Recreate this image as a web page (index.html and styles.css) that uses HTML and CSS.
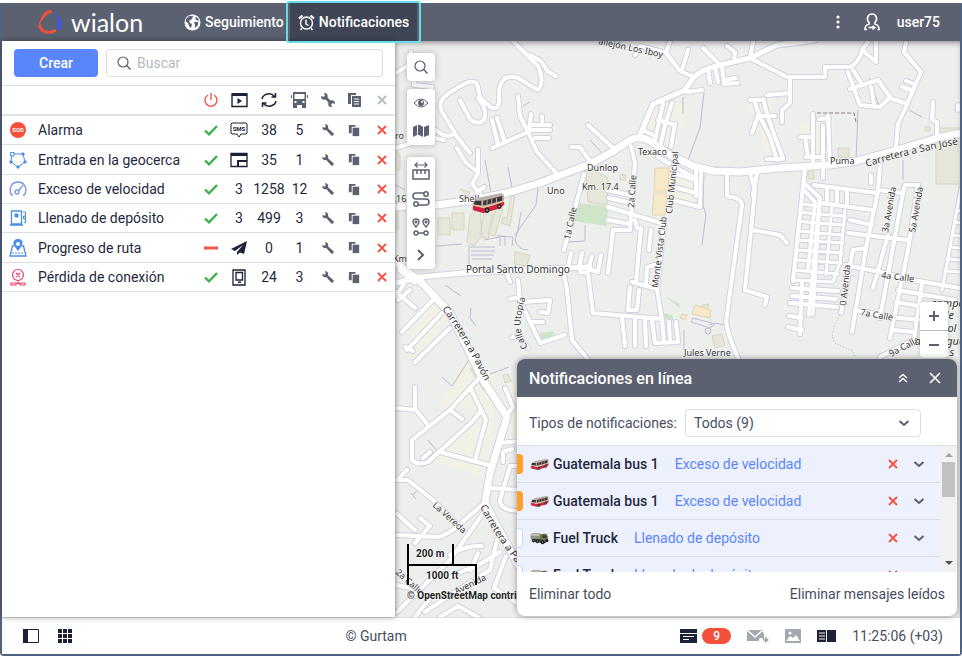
FILE: index.html
```html
<!DOCTYPE html>
<html lang="es">
<head>
    <meta charset="UTF-8">
    <meta name="viewport" content="width=device-width, initial-scale=1.0">
    <title>Wialon - Notificaciones</title>
    <link rel="stylesheet" href="styles.css">
</head>
<body>
    <!-- Shared icons -->
    <svg class="sprite" aria-hidden="true">
        <symbol id="i-search" viewBox="0 0 16 16"><circle cx="7" cy="7" r="5" fill="none" stroke="currentColor" stroke-width="1.2"/><path d="M10.6 10.6 14.5 14.5" stroke="currentColor" stroke-width="1.4"/></symbol>
        <symbol id="i-check" viewBox="0 0 16 16"><path d="M2 8.5 6 12.3 14 4" fill="none" stroke="#3fae4f" stroke-width="2.4"/></symbol>
        <symbol id="i-x" viewBox="0 0 16 16"><path d="M4 4 12 12M12 4 4 12" stroke="currentColor" stroke-width="1.9"/></symbol>
        <symbol id="i-wrench" viewBox="0 0 16 16"><path d="M1.5 4.5 4 5.5 5.5 4 4.5 1.5C7 1 9 3.5 8 6L14.5 12C15 13.5 13.5 15 12 14.500L6 8C3.5 9 1 7 1.5 4.500Z" fill="currentColor"/></symbol>
        <symbol id="i-wrenches" viewBox="0 0 16 16"><path d="M1 4 3.5 5 5 3.5 4 1C6.5 .5 8.5 3 7.5 5.5L10.5 8.5C13 7.5 15.5 9.5 15 12L12.5 11 11 12.5 12 15C9.5 15.5 7.5 13 8.5 10.5L5.5 7.5C3 8.5 .5 6.5 1 4Z" fill="currentColor"/></symbol>
        <symbol id="i-copy" viewBox="0 0 16 16"><path d="M2 2H9V4H5V11H2Z" fill="currentColor"/><path d="M6 5H13V14H6Z" fill="currentColor"/></symbol>
        <symbol id="i-down" viewBox="0 0 16 16"><path d="M3.5 6 8 10 12.5 6" fill="none" stroke="currentColor" stroke-width="2"/></symbol>
        <symbol id="i-bus" viewBox="0 0 36 24">
            <path d="M2 11 8 6 32 1 35 3V12L31 17 13 22 2 19Z" fill="#bdb0a8"/>
            <path d="M2 14 14 17 35 10V13L31 17 13 22 2 19Z" fill="#d5213f"/>
            <path d="M2 13.5 14 16 35 9.5" fill="none" stroke="#e6cf9a" stroke-width="1.3"/>
            <path d="M4 9 11 9V14L3 13Z" fill="#3d3236"/>
            <path d="M13 9 33 4V9L13 14Z" fill="#40363a"/>
            <path d="M17 8V13M22 7V12M27 6V11" stroke="#bdb0a8"/>
            <ellipse cx="17" cy="19" rx="2.6" ry="3" fill="#2b2527"/><ellipse cx="30" cy="15" rx="2.3" ry="2.8" fill="#2b2527"/>
            <circle cx="17" cy="19" r="1" fill="#aaa"/><circle cx="30" cy="15" r="1" fill="#aaa"/>
        </symbol>
        <symbol id="i-truck" viewBox="0 0 36 24">
            <path d="M1 5 5 2H18L22 5V12L18 14H3L1 11Z" fill="#8f957a"/>
            <path d="M3 4H18V7H3Z" fill="#c9cdb9"/>
            <path d="M19 5 24 3H31L34 8V17L24 20 18 16Z" fill="#6d7250"/>
            <path d="M23 6H30L32 10 24 11Z" fill="#343a37"/>
            <path d="M2 13H19L24 19 34 16V18L24 22Z" fill="#45453c"/>
            <circle cx="7" cy="16" r="3.6" fill="#292929"/><circle cx="14" cy="17" r="3.8" fill="#292929"/><circle cx="24" cy="19" r="4" fill="#222"/><circle cx="32" cy="16" r="3" fill="#222"/>
            <circle cx="7" cy="16" r="1" fill="#999"/><circle cx="14" cy="17" r="1" fill="#999"/><circle cx="24" cy="19" r="1.2" fill="#999"/>
        </symbol>
    </svg>

    <div class="app">
        <header class="topbar">
            <a href="#" class="logo">
                <svg width="24" height="26" viewBox="0 0 24 26">
                    <path d="M13 1C5 1 3 9 0 17 3 15 5 8 10 5 12 3 14 5 14 3Z" fill="#f4503c"/>
                    <path d="M0 17C2 24 10 27 18 23 19 21 17 20 15 21 10 23 4 22 3 15Z" fill="#f4503c"/>
                    <path d="M15 2C20 5 25 13 23 19 22 21 19 21 19 19 20 13 20 8 15 2Z" fill="#4355f5"/>
                </svg>
                <span>wialon</span>
            </a>
            <nav>
                <a href="#" class="tab">
                    <svg width="17" height="17" viewBox="0 0 17 17"><circle cx="8.5" cy="8.5" r="8" fill="#fff"/><path d="M2 5 5 2 9 2 8 5 5 7 6 9 8 10 7 14 5 12 4 9 2 8ZM11 3 14 4 15 7 12 6ZM10 8 14 8 14 11 11 14 11 11Z" fill="#5b6170"/></svg>
                    <span>Seguimiento</span>
                </a>
                <a href="#" class="tab active">
                    <svg width="17" height="17" viewBox="0 0 17 17" fill="none" stroke="#fff" stroke-width="1.4"><circle cx="8.5" cy="9" r="6"/><path d="M8 5.5V10L10.5 11.5M4 14 2.5 16M13 14 14.5 16"/><path d="M1 4.5 4.5 1.5M12.5 1.5 16 4.5" stroke-width="2.2"/></svg>
                    <span>Notificaciones</span>
                </a>
            </nav>
            <div class="account">
                <button class="plain" aria-label="Más"><svg width="4" height="14" viewBox="0 0 4 14" fill="#fff"><circle cx="2" cy="2" r="1.6"/><circle cx="2" cy="7" r="1.6"/><circle cx="2" cy="12" r="1.6"/></svg></button>
                <button class="plain user">
                    <svg width="16" height="18" viewBox="0 0 16 18" fill="none" stroke="#fff" stroke-width="1.7"><path d="M5 9.5C2 6 3.5 1 8 1S14 6 11 9.5M5 9V11C2 12 1 13 1 16.5H3M11 9V11C14 12 15 13 15 16.5H13.5"/><path d="M4.5 14.5H9"/><path d="M8.5 12 12 14.5 8.5 17.5Z" fill="#fff" stroke="none"/></svg>
                    <span>user75</span>
                </button>
            </div>
        </header>

        <main>
            <section class="sidebar">
                <div class="tools">
                    <button class="create">Crear</button>
                    <label class="search">
                        <svg width="16" height="16" class="grey"><use href="#i-search"/></svg>
                        <input type="text" placeholder="Buscar" aria-label="Buscar">
                    </label>
                </div>
                <table>
                    <colgroup><col class="c-icon"><col><col class="c-28"><col class="c-28"><col class="c-32"><col class="c-29"><col class="c-27"><col class="c-27"><col class="c-27"></colgroup>
                    <thead>
                        <tr>
                            <th></th>
                            <th></th>
                            <th><svg width="16" height="16" viewBox="0 0 16 16" fill="none" stroke="#f05545" stroke-width="1.4"><path d="M5 3A6 6 0 1 0 11 3M8 1V8"/></svg></th>
                            <th><svg width="17" height="16" viewBox="0 0 17 16"><path d="M1 2H16V14.5H1Z" fill="none" stroke="#1b2136" stroke-width="1.4"/><path d="M1 1H16V4H1Z" fill="#1b2136"/><path d="M6.5 6 11 9 6.5 12Z" fill="#1b2136"/></svg></th>
                            <th><svg width="18" height="16" viewBox="0 0 18 16" fill="none" stroke="#1b2136" stroke-width="1.5"><path d="M2 7A7 6.5 0 0 1 14.5 4.5M15.5 1V5H11.5M16 9A7 6.5 0 0 1 3.5 11.5M2.5 15V11H6.5"/></svg></th>
                            <th><svg width="17" height="16" viewBox="0 0 17 16" fill="#5b6170"><path d="M2 0H15V13H2ZM3.500 2V7H13.500V2ZM3.500 9V11H5.500V9ZM11.500 9V11H13.500V9Z" fill-rule="evenodd"/><path d="M2 13H6V16H2ZM11 13H15V16H11ZM0 3H1V6H0ZM16 3H17V6H16Z"/></svg></th>
                            <th><svg width="16" height="16" class="grey"><use href="#i-wrenches"/></svg></th>
                            <th><svg width="15" height="16" viewBox="0 0 15 16"><path d="M1 1H9V3H4V12H1Z" fill="#5b6170"/><path d="M5 4H14V15H5Z" fill="#5b6170"/><path d="M7 7H12M7 9.5H12M7 12H12" stroke="#fff"/></svg></th>
                            <th><svg width="16" height="16" class="light"><use href="#i-x"/></svg></th>
                        </tr>
                    </thead>
                    <tbody>
                        <tr>
                            <td><svg width="18" height="18" viewBox="0 0 18 18"><circle cx="9" cy="9" r="8" fill="#f4503c"/><text x="9" y="11" class="sos">SOS</text></svg></td>
                            <td class="name">Alarma</td>
                            <td><svg width="16" height="16"><use href="#i-check"/></svg></td>
                            <td><svg width="18" height="18" viewBox="0 0 18 18"><path d="M2 2H16L17 3V12L16 13H11L9 16 7 13H2L1 12V3Z" fill="none" stroke="#1b2136"/><text x="9" y="10" class="sms">SMS</text></svg></td>
                            <td>38</td>
                            <td>5</td>
                            <td><button class="plain grey" aria-label="Propiedades"><svg width="14" height="14"><use href="#i-wrench"/></svg></button></td>
                            <td><button class="plain grey" aria-label="Copiar"><svg width="15" height="15"><use href="#i-copy"/></svg></button></td>
                            <td><button class="plain red" aria-label="Eliminar"><svg width="16" height="16"><use href="#i-x"/></svg></button></td>
                        </tr>
                        <tr>
                            <td><svg width="18" height="18" viewBox="0 0 18 18" fill="none" stroke="#4a8ee8"><path d="M3 3H14L16 11 9 16 2 11Z"/><path d="M1.5 1.5H5V5H1.5Z" fill="#fff"/><path d="M13 2H15V4H13ZM15 10H17V12H15ZM8 15H10V17H8ZM1 10H3V12H1Z" fill="#4a8ee8"/></svg></td>
                            <td class="name">Entrada en la geocerca</td>
                            <td><svg width="16" height="16"><use href="#i-check"/></svg></td>
                            <td><svg width="18" height="16" viewBox="0 0 18 16"><path d="M1 1.5H17V14.5H1Z" fill="none" stroke="#1b2136" stroke-width="1.3"/><path d="M1 1H17V4H1Z" fill="#1b2136"/><path d="M8 14V9H17" fill="none" stroke="#1b2136" stroke-width="2"/></svg></td>
                            <td>35</td>
                            <td>1</td>
                            <td><button class="plain grey" aria-label="Propiedades"><svg width="14" height="14"><use href="#i-wrench"/></svg></button></td>
                            <td><button class="plain grey" aria-label="Copiar"><svg width="15" height="15"><use href="#i-copy"/></svg></button></td>
                            <td><button class="plain red" aria-label="Eliminar"><svg width="16" height="16"><use href="#i-x"/></svg></button></td>
                        </tr>
                        <tr>
                            <td><svg width="18" height="18" viewBox="0 0 18 18" fill="none" stroke="#7a93ee" stroke-width="1.3"><path d="M4 15H2.5C-1 8 3 2 9 2S19 8 15.5 15H14M9 11 14 5.5"/><circle cx="8" cy="12" r="2"/></svg></td>
                            <td class="name">Exceso de velocidad</td>
                            <td><svg width="16" height="16"><use href="#i-check"/></svg></td>
                            <td>3</td>
                            <td>1258</td>
                            <td>12</td>
                            <td><button class="plain grey" aria-label="Propiedades"><svg width="14" height="14"><use href="#i-wrench"/></svg></button></td>
                            <td><button class="plain grey" aria-label="Copiar"><svg width="15" height="15"><use href="#i-copy"/></svg></button></td>
                            <td><button class="plain red" aria-label="Eliminar"><svg width="16" height="16"><use href="#i-x"/></svg></button></td>
                        </tr>
                        <tr>
                            <td><svg width="18" height="18" viewBox="0 0 18 18" fill="none" stroke="#4a8ee8"><path d="M2.5 2H12.5V15H2.5ZM1 16H14" stroke-width="1.3"/><path d="M6 5H9V8H6Z" fill="#4a8ee8"/><path d="M14 3H16.5V13.5H14.5M14.5 7H16V10H14.5Z"/></svg></td>
                            <td class="name">Llenado de depósito</td>
                            <td><svg width="16" height="16"><use href="#i-check"/></svg></td>
                            <td>3</td>
                            <td>499</td>
                            <td>3</td>
                            <td><button class="plain grey" aria-label="Propiedades"><svg width="14" height="14"><use href="#i-wrench"/></svg></button></td>
                            <td><button class="plain grey" aria-label="Copiar"><svg width="15" height="15"><use href="#i-copy"/></svg></button></td>
                            <td><button class="plain red" aria-label="Eliminar"><svg width="16" height="16"><use href="#i-x"/></svg></button></td>
                        </tr>
                        <tr>
                            <td><svg width="18" height="18" viewBox="0 0 18 18"><path d="M5 7H3.5L1 17H17L14.5 7H13" fill="none" stroke="#4a8ee8" stroke-width="1.3"/><path d="M3 14H15" stroke="#4a8ee8" stroke-dasharray="2 1"/><path d="M9 0C3 0 4 6 6 8L9 12 12 8C14 6 15 0 9 0ZM9 3A2 2 0 1 1 9 7 2 2 0 1 1 9 3Z" fill="#4a8ee8" fill-rule="evenodd"/></svg></td>
                            <td class="name">Progreso de ruta</td>
                            <td><svg width="16" height="16" viewBox="0 0 16 16"><path d="M1 8H15" stroke="#f05545" stroke-width="3"/></svg></td>
                            <td><svg width="16" height="16" viewBox="0 0 16 16"><path d="M16 1 0 9 4 11 12 5 6 12V15L9 12.5 13 14Z" fill="#1b2136"/></svg></td>
                            <td>0</td>
                            <td>1</td>
                            <td><button class="plain grey" aria-label="Propiedades"><svg width="14" height="14"><use href="#i-wrench"/></svg></button></td>
                            <td><button class="plain grey" aria-label="Copiar"><svg width="15" height="15"><use href="#i-copy"/></svg></button></td>
                            <td><button class="plain red" aria-label="Eliminar"><svg width="16" height="16"><use href="#i-x"/></svg></button></td>
                        </tr>
                        <tr>
                            <td><svg width="18" height="18" viewBox="0 0 18 18" fill="none" stroke="#f5406a" stroke-width="1.2"><circle cx="9" cy="7" r="5.5"/><path d="M7 5 11 9M11 5 7 9M9 12.5V15M2 15H7V17H2ZM11 15H16V17H11ZM7 15.5H11"/></svg></td>
                            <td class="name">Pérdida de conexión</td>
                            <td><svg width="16" height="16"><use href="#i-check"/></svg></td>
                            <td><svg width="14" height="17" viewBox="0 0 14 17" fill="none" stroke="#1b2136" stroke-width="1.3"><path d="M1 1H13V16H1ZM4 3.5H10.5V11H4Z"/><path d="M6 12.5H9V14H6Z" fill="#1b2136" stroke="none"/></svg></td>
                            <td>24</td>
                            <td>3</td>
                            <td><button class="plain grey" aria-label="Propiedades"><svg width="14" height="14"><use href="#i-wrench"/></svg></button></td>
                            <td><button class="plain grey" aria-label="Copiar"><svg width="15" height="15"><use href="#i-copy"/></svg></button></td>
                            <td><button class="plain red" aria-label="Eliminar"><svg width="16" height="16"><use href="#i-x"/></svg></button></td>
                        </tr>
                    </tbody>
                </table>
            </section>

            <section class="map">
                <svg class="canvas" viewBox="395 41 565 576" preserveAspectRatio="xMinYMin slice">
                    <defs>
                        <g id="minor">
                            <path d="M513 41 530 58 538 66Q545 82 538 90 530 86 522 80 512 74 504 79 498 86 499 98 500 110 492 108 484 102 480 97L477 84Q474 80 466 83 452 90 444 97 438 104 442 112L458 138 470 153"/>
                            <path d="M530 55 541 61 548 72 556 76 551 73M478 98Q488 110 484 120 478 126 470 119L460 100M454 134Q446 139 436 130M518 96 520 116 528 132 537 152 558 175M528 132 492 148M492 120 498 145M497 118 505 142"/>
                            <path d="M529 131 531 114M542 116V124M532 125H550M530 130H550M535 138H549M457 148 466 163 478 172V150M478 173 472 184 481 196M484 187 477 192M396 73 412 63M411 52 414 85 432 87M396 148 430 137 444 140"/>
                            <path d="M584 174 564 250M571 253 568 268M582 253 579 268M592 256 588 270M601 255 598 272 588 269M563 270 567 290 572 340 590 362M588 125 613 148M580 147 590 161M571 147 580 147"/>
                            <path d="M670 41 666 53 680 71 694 77M688 50 682 70M635 55 640 46 666 53M703 48 720 65M727 46 735 52 734 61M708 68 710 83M715 67 718 82M722 66 724 84 738 83M724 80 736 78M686 92 702 90M750 58 753 42"/>
                            <path d="M750 58 787 77H825V67H850Q860 62 862 50L868 42M862 50 876 62V42M790 77V103L782 110V122M767 95 790 93M848 72 860 105 880 107 890 97 878 80 850 89M853 70 862 84M871 87 874 104M906 43 904 52 921 72 908 102 898 124 896 146M889 98 908 104M906 81 914 84M902 87 911 90M933 102 932 120 937 122V137M958 105V110"/>
                            <path d="M631 146 635 163 630 230M607 190 630 195M609 198 630 203M608 207 664 224 657 289 662 320M632 282 657 289M641 228 636 282M651 230 649 250M655 265 647 267 646 284M608 220 630 224M630 230 613 230 608 273M635 220 637 228M580 272 588 273 593 313 662 319"/>
                            <path d="M622 317 625 346M635 318V346M645 318 646 346M652 320 655 343 678 342 676 322M662 320 664 341M669 322 670 341M630 287 628 310 637 310 639 290"/>
                            <path d="M663 103 655 140M672 103 665 125 660 147M675 124 671 147M658 120 675 125M643 130 655 136M658 157 680 170 696 178M701 170 700 207 673 200M696 170V196M676 174 696 180M674 187 696 193"/>
                            <path d="M727 173V196Q742 198 742 205L726 322Q728 335 738 358M750 173 755 190 745 290 767 297 765 305M757 173 753 195M752 230 780 235 787 243M750 100H764M754 100 760 117 770 137 777 160M763 99 768 117 775 137 783 158M757 116H775M752 133 758 116M767 159H783"/>
                            <path d="M813 114V163M823 126V178M828 116 830 165M800 137H813M805 137 808 157M819 119 829 118M806 157H820M805 168 803 187 793 281M805 184 820 198 809 315M803 189 815 202 808 270M814 185 877 193M880 165 878 191 866 248 852 332M871 175V183"/>
                            <path d="M878 190 903 193 905 185H918L908 250 890 338M903 193 880 318M888 235 873 288M820 203 873 210M850 220 872 225M848 233 907 240M853 250 866 248M853 250 850 265 841 313M845 265 880 272 912 280 960 288M855 310 890 317 920 320M893 330 915 332M898 290 925 295M896 302 924 307M922 284 914 340M827 188V203M837 189V204M847 190V205M925 295 955 300"/>
                            <path d="M792 288 838 291M792 296 836 299M790 303 837 307M789 316 802 318M788 327 802 330M802 283 800 334M880 357 914 340"/>
                            <path d="M396 292 415 308M404 284 396 296M410 290 398 300M433 300 402 332M442 313 407 350M450 328 415 362M405 347 413 351M480 377 450 410 412 440V460Q418 466 428 462L472 422 480 412M470 387 486 420 475 461M440 452 492 466M450 410 462 419M396 408 416 410 428 425M415 387V410M423 458 430 452"/>
                            <path d="M505 388 513 407 508 413M500 443 520 441M503 462V452L512 449M490 488 520 490M520 466H510L500 500Q500 511 520 511M483 504 453 530 440 537 396 535M484 512 450 560 397 612M396 513 415 530M420 518 430 526 415 543M397 480 407 470M398 480 408 480 433 500 460 527M450 555Q465 545 482 546M478 553 472 567 450 577M497 540 490 570 455 592 425 612M506 556 494 588 520 605M396 585 420 590M440 617 458 606 478 617M415 617 430 598M470 570 500 552"/>
                            <path d="M518 280 520 300 540 343 565 335M510 299 520 297M523 302 550 300 548 313 540 312M533 322H543M512 337H520L528 348M505 267 510 282"/>
                        </g>
                        <g id="blocks">
                            <path d="M803 204 816 206M801 212 815 214M800 221 813 223M798 231 812 232M797 240 843 243M797 250 842 253M796 260 841 263M794 270 838 274M793 280 833 282M818 214 845 216M816 223 844 225M815 233 843 235M845 210 840 262 833 282M820 204 813 315M832 206 826 275"/>
                            <path d="M961 188 942 290M957 210 961 211M955 222 961 223M952 235 961 236M950 247 961 248M947 259 961 260M945 271 961 272"/>
                        </g>
                        <g id="middle">
                            <path d="M815 40 777 45Q762 52 750 58L720 65Q700 70 693 78L685 90 660 101 653 104 640 135"/>
                            <path d="M396 283 420 277 463 273 523 270 590 267M415 282 400 270"/>
                        </g>
                        <g id="major">
                            <path d="M396 207 436 205 473 200 507 193 540 183 558 176 590 164 612 152 630 140Q640 135 650 141L670 155 693 166 713 171 740 172 780 168 830 165 857 161 897 150 937 138 962 133"/>
                            <path d="M396 263 420 281 450 313 483 380 507 417 490 473 485 503 517 563 540 600"/>
                        </g>
                        <path id="p-pavon" d="M442 309Q465 340 487 386L497 406"/>
                        <path id="p-pavon2" d="M480 507Q493 533 519 567L540 597"/>
                        <path id="p-utopia" d="M528 347Q515 330 525 300L529 285"/>
                        <path id="p-jose" d="M867 167Q905 154 966 143L990 139"/>
                    </defs>

                    <g class="zones">
                        <path d="M431 302 448 316 418 363 404 348ZM465 360 495 375 494 420 485 478 430 460 480 410 440 405ZM655 105 690 103 675 150 645 132ZM672 170 702 176 700 210 670 200ZM800 125 834 115 832 160 805 160ZM745 97 770 95 784 160 770 160ZM507 385 517 380V440L505 425Z"/>
                    </g>
                    <g class="buildings">
                        <path d="M438 218H450V235H438ZM452 213H464V230H452ZM470 215 480 207 482 236 474 246 467 242ZM485 206 494 206 488 240 480 235ZM498 203 504 204 495 236 488 234ZM515 194 510 226 501 223 503 217 507 218 511 195ZM585 165 608 178 607 205 588 202ZM515 252 530 255 527 266 514 264ZM620 175H626V180H620ZM460 189 470 192 468 196ZM936 128H961V184H936ZM838 148H849V157H838ZM808 170H814V179H808ZM925 127H930V131H925ZM503 375 508 374 511 381 505 383ZM702 305 709 304 707 311ZM395 150 400 155V170H395ZM395 200 398 202V230H395ZM712 336 722 334 725 345 715 348ZM470 368 487 380 484 391Z"/>
                    </g>
                    <g class="shops"><path d="M655 168H669L668 191H654ZM654 193H667L665 215H652ZM695 305 711 310 710 318 692 314ZM682 314 687 315 685 320 680 318Z"/></g>
                    <g class="parks"><path d="M576 203 608 206 607 226 574 221ZM666 297 679 303 680 308ZM664 313 672 315 674 320 663 319ZM540 333 553 331 554 337 541 340Z"/></g>
                    <g class="paths">
                        <path d="M485 160 491 193M508 167 513 193M538 188 536 205 515 235M521 212 518 230 515 240Q518 250 528 250M469 245V265M470 247H495M471 251H495M471 255H494M472 259H492M436 246 462 244M497 236 513 237 512 246M500 238V246M505 237V246M484 240 505 236M585 225V241L568 242M683 97V114M701 90 704 93 700 128 688 160M704 171 703 205 706 215 702 245M858 110 856 160M880 108 869 78M909 110 922 117M903 160V180M590 140 603 154M396 185 405 190M523 106 530 102M684 330V350M490 374 509 367M460 345 474 352 452 386 442 377M445 285 461 296M471 308 470 318 476 326M436 450 428 440M413 495 419 488M411 493 416 499"/>
                        <path d="M693 318 715 324 710 328 691 322ZM709 325 715 323 725 325"/><circle cx="708" cy="331" r="3"/>
                        <path class="dark" d="M817 113H854L856 122"/>
                        <path class="trail" d="M840 315Q828 335 835 343L853 351 855 358"/>
                    </g>

                    <use href="#minor" class="case minor"/>
                    <use href="#blocks" class="case blocks"/>
                    <use href="#middle" class="case middle"/>
                    <use href="#major" class="case major"/>
                    <use href="#minor" class="road minor"/>
                    <use href="#blocks" class="road blocks"/>
                    <use href="#middle" class="road middle"/>
                    <use href="#major" class="road major"/>

                    <g class="labels">
                        <text x="466" y="273" class="place">Portal Santo Domingo</text>
                        <text x="459" y="202">Shell</text>
                        <text x="547" y="194">Uno</text>
                        <text x="587" y="171">Dunlop</text>
                        <text x="582" y="190">Km. 17.4</text>
                        <text x="638" y="155">Texaco</text>
                        <text x="830" y="164">Puma</text>
                        <text x="684" y="356">Jules Verne</text>
                        <text x="396" y="202">16.5</text>
                        <text x="393" y="262">Km. 1</text>
                        <text x="395" y="139">ro</text>
                        <text transform="translate(598 44) rotate(12)">allejón Los Iboy</text>
                        <text transform="translate(570 240) rotate(-78)">1a Calle</text>
                        <text transform="translate(634 208) rotate(-86)">2a Calle</text>
                        <text transform="translate(672 214) rotate(-84)">Club Municipal</text>
                        <text transform="translate(658 288) rotate(-83)">Monte Vista Club</text>
                        <text transform="translate(888 233) rotate(-80)">3a Avenida</text>
                        <text transform="translate(915 233) rotate(-80)">5a Avenida</text>
                        <text transform="translate(846 306) rotate(-84)">0 Avenida</text>
                        <text transform="translate(881 278) rotate(7)">4a Calle</text>
                        <text transform="translate(860 315) rotate(10)">7a Calle</text>
                        <text transform="translate(891 357) rotate(-28)">9a Calle</text>
                        <text transform="translate(432 506) rotate(42)">La Vereda</text>
                        <text transform="translate(395 573) rotate(42)">2a Calle</text>
                        <text transform="translate(445 600) rotate(-26)">1a Avenida</text>
                        <text class="street"><textPath href="#p-jose">Carretera a San José</textPath></text>
                        <text class="street"><textPath href="#p-pavon">Carretera a Pavón</textPath></text>
                        <text class="street"><textPath href="#p-pavon2">Carretera a Pavón</textPath></text>
                        <text><textPath href="#p-utopia">Calle Utopía</textPath></text>
                        <text x="948" y="307" text-anchor="middle" class="area">campo</text>
                        <text x="948" y="319" text-anchor="middle" class="area">de</text>
                        <text x="942" y="332" text-anchor="middle" class="area">fútbol</text>
                        <text x="942" y="345" text-anchor="middle" class="area">dominguez</text>
                        <text x="952" y="356" text-anchor="middle" class="area">s</text>
                    </g>
                    <use href="#i-bus" x="471" y="192" width="34" height="23"/>
                    <g class="scale">
                        <path d="M408 544V585M407 565H477M453 544V565M476 565V585"/>
                        <text x="416" y="557">200 m</text>
                        <text x="426" y="579">1000 ft</text>
                        <text x="407" y="599">© OpenStreetMap contributors</text>
                    </g>
                </svg>

                <div class="controls">
                    <div class="group"><button aria-label="Buscar en el mapa"><svg width="16" height="16"><use href="#i-search"/></svg></button></div>
                    <div class="group">
                        <button aria-label="Visibilidad"><svg width="16" height="12" viewBox="0 0 16 12"><path d="M1 6Q8-2 15 6 8 14 1 6Z" fill="none" stroke="#5b6170"/><circle cx="8" cy="6" r="3" fill="#5b6170"/><circle cx="9" cy="5" r="1" fill="#fff"/></svg></button>
                        <button aria-label="Capas"><svg width="16" height="12" viewBox="0 0 16 12" fill="#5b6170"><path d="M0 2 4 0V10L0 12ZM5 0H7L10 2V12L6 10H5ZM11 2 16 0V10L11 12Z"/></svg></button>
                    </div>
                    <div class="group last">
                        <button aria-label="Regla"><svg width="18" height="18" viewBox="0 0 18 18" fill="none" stroke="#5b6170" stroke-width="1.5"><path d="M1 8H17V17H1ZM5 8V12M9 8V12M13 8V12"/><path d="M3 3H15M5.5 .5 3 3 5.5 5.5M12.5 .5 15 3 12.500 5.500" stroke-width="1.2"/></svg></button>
                        <button aria-label="Ruta"><svg width="18" height="18" viewBox="0 0 18 18" fill="none" stroke="#5b6170" stroke-width="1.5"><circle cx="14" cy="4" r="2.2"/><circle cx="4" cy="14" r="2.2"/><path d="M12 3H4C0 3 0 9 4 9H14C18 9 18 15 14 15H6"/></svg></button>
                        <button aria-label="Puntos"><svg width="18" height="18" viewBox="0 0 18 18" fill="none" stroke="#5b6170" stroke-width="1.4"><path d="M4 9C-1 4 1 1 4 1S9 4 4 9ZM14 9C9 4 11 1 14 1S19 4 14 9Z"/><circle cx="4" cy="4" r=".8"/><circle cx="14" cy="4" r=".8"/><circle cx="4" cy="15" r="2"/><circle cx="14" cy="15" r="2"/><path d="M6 15H12"/></svg></button>
                        <button aria-label="Más herramientas"><svg width="12" height="12" viewBox="0 0 12 12" fill="none" stroke="#5b6170" stroke-width="2"><path d="M3 1 8 6 3 11"/></svg></button>
                    </div>
                </div>
                <div class="zoom">
                    <button aria-label="Acercar"><svg width="12" height="12" viewBox="0 0 12 12"><path d="M1 6H11M6 1V11" stroke="#5b6170" stroke-width="2"/></svg></button>
                    <button aria-label="Alejar"><svg width="12" height="12" viewBox="0 0 12 12"><path d="M1 6H11" stroke="#5b6170" stroke-width="2"/></svg></button>
                </div>
            </section>

            <section class="online">
                <div class="online-head">
                    <h2>Notificaciones en línea</h2>
                    <button class="plain" aria-label="Minimizar"><svg width="10" height="10" viewBox="0 0 10 10" fill="none" stroke="#fff" stroke-width="1.4"><path d="M1 5 5 1.5 9 5M1 9 5 5.5 9 9"/></svg></button>
                    <button class="plain" aria-label="Cerrar"><svg width="12" height="12" viewBox="0 0 12 12"><path d="M1 1 11 11M11 1 1 11" stroke="#fff" stroke-width="1.7"/></svg></button>
                </div>
                <div class="filter">
                    <label for="type">Tipos de notificaciones:</label>
                    <div class="select">
                        <select id="type"><option>Todos (9)</option></select>
                        <svg width="16" height="16" class="grey"><use href="#i-down"/></svg>
                    </div>
                </div>
                <div class="list">
                    <ul>
                        <li><i class="mark orange"></i><svg width="19" height="13"><use href="#i-bus"/></svg><b>Guatemala bus 1</b><a href="#">Exceso de velocidad</a><button class="plain red" aria-label="Eliminar"><svg width="16" height="16"><use href="#i-x"/></svg></button><button class="plain grey" aria-label="Expandir"><svg width="16" height="16"><use href="#i-down"/></svg></button></li>
                        <li><i class="mark orange"></i><svg width="19" height="13"><use href="#i-bus"/></svg><b>Guatemala bus 1</b><a href="#">Exceso de velocidad</a><button class="plain red" aria-label="Eliminar"><svg width="16" height="16"><use href="#i-x"/></svg></button><button class="plain grey" aria-label="Expandir"><svg width="16" height="16"><use href="#i-down"/></svg></button></li>
                        <li><i class="mark"></i><svg width="19" height="13"><use href="#i-truck"/></svg><b>Fuel Truck</b><a href="#">Llenado de depósito</a><button class="plain red" aria-label="Eliminar"><svg width="16" height="16"><use href="#i-x"/></svg></button><button class="plain grey" aria-label="Expandir"><svg width="16" height="16"><use href="#i-down"/></svg></button></li>
                        <li><i class="mark"></i><svg width="19" height="13"><use href="#i-truck"/></svg><b>Fuel Truck</b><a href="#">Llenado de depósito</a><button class="plain red" aria-label="Eliminar"><svg width="16" height="16"><use href="#i-x"/></svg></button><button class="plain grey" aria-label="Expandir"><svg width="16" height="16"><use href="#i-down"/></svg></button></li>
                    </ul>
                    <div class="bar">
                        <svg width="8" height="4" viewBox="0 0 8 4"><path d="M0 4 4 0 8 4Z" fill="#a3a3a3"/></svg>
                        <div class="thumb"></div>
                        <svg width="8" height="4" viewBox="0 0 8 4"><path d="M0 0 4 4 8 0Z" fill="#505050"/></svg>
                    </div>
                </div>
                <div class="online-foot">
                    <button class="plain">Eliminar todo</button>
                    <button class="plain">Eliminar mensajes leídos</button>
                </div>
            </section>
        </main>

        <footer>
            <div class="left">
                <button class="plain" aria-label="Panel"><svg width="16" height="14" viewBox="0 0 16 14"><path d="M.5.5H15.5V13.5H.5Z" fill="none" stroke="#1b2136"/><path d="M0 0H5V14H0Z" fill="#1b2136"/></svg></button>
                <button class="plain" aria-label="Aplicaciones"><svg width="14" height="14" viewBox="0 0 14 14" fill="#1b2136"><path d="M0 0H4V4H0ZM5 0H9V4H5ZM10 0H14V4H10ZM0 5H4V9H0ZM5 5H9V9H5ZM10 5H14V9H10ZM0 10H4V14H0ZM5 10H9V14H5ZM10 10H14V14H10Z"/></svg></button>
            </div>
            <span>© Gurtam</span>
            <div class="right">
                <button class="plain alerts" aria-label="Notificaciones en línea: 9"><svg width="17" height="14" viewBox="0 0 17 14"><path d="M0 0H17V4H0ZM0 5H17V14H0Z" fill="#1b2136"/><path d="M3 7.5H14M3 10.5H9" stroke="#fff"/></svg><span class="badge">9</span></button>
                <svg width="22" height="14" viewBox="0 0 22 14"><path d="M0 1H16V6L12 10V12H0Z" fill="#a3a7b0"/><path d="M0 1 8 8 16 1" fill="none" stroke="#fff" stroke-width="1.5"/><path d="M13 8H17M16 11H20" stroke="#a3a7b0" stroke-width="1.5"/><path d="M17 4 13 7.500 17 11ZM18 7.500 22 11 18 14Z" fill="#a3a7b0"/></svg>
                <svg width="16" height="14" viewBox="0 0 16 14"><path d="M0 0H16V14H0Z" fill="#a3a7b0"/><path d="M1 12 5 7 8 9 11 6 15 12Z" fill="#fff"/><circle cx="5" cy="4" r="1.5" fill="#fff"/></svg>
                <svg width="19" height="12" viewBox="0 0 19 12"><path d="M0 0H9V12H0ZM10 0H19V12H10Z" fill="#1b2136"/><path d="M2 3H8M2 6H8M2 9H8" stroke="#fff"/></svg>
                <span>11:25:06 (+03)</span>
            </div>
        </footer>
    </div>
</body>
</html>
```
FILE: styles.css
```css
* {
    box-sizing: border-box;
}
body {
    margin: 0;
    font-family: Roboto, 'Liberation Sans', sans-serif;
    font-size: 14px;
    color: #1f2940;
    background-color: #fff;
}
button, input, select {
    font: inherit;
    color: inherit;
}
button {
    cursor: pointer;
}
svg {
    display: block;
    flex: none;
}
.sprite {
    position: absolute;
    width: 0;
    height: 0;
}
.plain {
    display: flex;
    align-items: center;
    padding: 0;
    border: none;
    background: none;
}
.grey {
    color: #5b6170;
}
.light {
    color: #b7bbc3;
}
.red {
    color: #f05545;
}
.app {
    display: flex;
    flex-direction: column;
    height: 100vh;
    padding: 3px 2px 0;
    border-bottom: 2px solid #52627f;
    border-radius: 4px;
    background: linear-gradient(#fff 3px, #52627f 3px);
}

/* top bar */
.topbar {
    display: flex;
    height: 38px;
    flex: none;
    align-items: center;
    background-color: #5b6170;
    color: #fff;
    font-weight: 500;
}
.logo {
    display: flex;
    align-items: center;
    gap: 9px;
    width: 174px;
    padding-left: 36px;
    color: #fff;
    font-family: Lato, sans-serif;
    font-size: 25px;
    font-weight: 400;
    line-height: 30px;
    text-decoration: none;
}
nav {
    display: flex;
    align-self: stretch;
}
.tab {
    display: flex;
    align-items: center;
    gap: 4px;
    padding: 0 6px 0 8px;
    color: #fff;
    text-decoration: none;
}
.tab.active {
    position: relative;
    padding-right: 8px;
    background-color: #3f4555;
}
.tab.active::after {
    content: '';
    position: absolute;
    inset: -2px -4px;
    border: 2px solid #66dcea;
    border-radius: 3px;
    z-index: 5;
}
.account {
    display: flex;
    align-items: center;
    gap: 24px;
    margin-left: auto;
    padding-right: 20px;
}
.user {
    gap: 17px;
}

/* sidebar */
main {
    display: flex;
    flex: 1;
    min-height: 0;
    position: relative;
}
.sidebar {
    width: 393px;
    flex: none;
    background-color: #fff;
    box-shadow: 0 0 6px rgba(0, 0, 0, 0.4);
    z-index: 1;
}
.tools {
    display: flex;
    gap: 8px;
    padding: 8px 12px;
    height: 45px;
    border-bottom: 1px solid #ddd;
}
.create {
    width: 84px;
    height: 28px;
    border: none;
    border-radius: 4px;
    background-color: #5b86fb;
    color: #fff;
    font-weight: 500;
}
.search {
    display: flex;
    flex: 1;
    align-items: center;
    gap: 4px;
    height: 28px;
    padding: 0 9px;
    border: 1px solid #ddd;
    border-radius: 4px;
}
.search input {
    flex: 1;
    min-width: 0;
    padding: 0 1px;
    border: none;
    outline: none;
}
.search input::placeholder {
    color: #b5b9bf;
}
table {
    width: 100%;
    table-layout: fixed;
    border-collapse: separate;
    border-spacing: 0;
}
.c-icon {
    width: 32px;
}
.c-27 {
    width: 27px;
}
.c-28 {
    width: 28px;
}
.c-29 {
    width: 29px;
}
.c-32 {
    width: 32px;
}
th, td {
    padding: 0;
    height: 29px;
    border-bottom: 1px solid #ddd;
    text-align: center;
    line-height: 20px;
}
tr:nth-child(3n+2) td {
    height: 30px;
}
th {
    height: 30px;
    border-bottom: 2px solid #e2e2e2;
}
th svg, td svg, td .plain {
    margin: 0 auto;
}
td.name {
    padding-left: 4px;
    text-align: left;
}
.sos, .sms {
    font-size: 6px;
    font-weight: 700;
    text-anchor: middle;
    fill: #fff;
}
.sms {
    fill: #1b2136;
}

/* map */
.map {
    flex: 1;
    min-width: 0;
    position: relative;
    overflow: hidden;
    background-color: #edefed;
}
.map::after {
    content: '';
    position: absolute;
    inset: 0;
    box-shadow: inset 0 4px 6px -3px rgba(0, 0, 0, 0.5);
    pointer-events: none;
}
.canvas {
    width: 100%;
    height: 100%;
}
.case, .road {
    fill: none;
    stroke-linecap: round;
    stroke-linejoin: round;
}
.case {
    stroke: #d2d2e2;
}
.road {
    stroke: #fff;
}
.case.minor {
    stroke-width: 6px;
}
.road.minor {
    stroke-width: 4px;
}
.case.blocks {
    stroke-width: 5px;
}
.road.blocks {
    stroke-width: 3px;
}
.case.middle {
    stroke-width: 7px;
}
.road.middle {
    stroke-width: 5px;
}
.case.major {
    stroke-width: 9px;
}
.road.major {
    stroke-width: 7px;
}
.zones {
    fill: #f2f1e6;
}
.buildings {
    fill: #e7e6da;
    stroke: #d9d5be;
}
.shops {
    fill: #f7e9c8;
    stroke: #e0d4b4;
}
.parks {
    fill: #cfe5c8;
}
.paths {
    fill: none;
    stroke: #bcbcd0;
}
.dark {
    stroke: #8c8078;
    stroke-dasharray: 4 2;
}
.trail {
    stroke: #c7a9a9;
    stroke-dasharray: 1 2;
}
.labels {
    font-family: 'Noto Sans', sans-serif;
    font-size: 9px;
    fill: #333;
    stroke: #fff;
    stroke-width: 1px;
    paint-order: stroke;
}
.place, .street {
    font-size: 10px;
}
.area {
    font-size: 11px;
    font-style: italic;
}
.scale {
    font-size: 10px;
    font-weight: 700;
    fill: #222;
    stroke: #fff;
    stroke-width: 1px;
    paint-order: stroke;
}
.scale path {
    fill: none;
    stroke: #000;
    stroke-width: 2px;
}
.controls {
    position: absolute;
    top: 12px;
    left: 12px;
    display: flex;
    flex-direction: column;
    gap: 8px;
}
.group {
    display: flex;
    flex-direction: column;
    border-radius: 4px;
    background-color: #fff;
    box-shadow: 0 0 6px rgba(0, 0, 0, 0.25);
}
.group.last {
    margin-top: 4px;
}
.group button, .zoom button {
    display: flex;
    align-items: center;
    justify-content: center;
    width: 28px;
    height: 28px;
    padding: 0;
    border: none;
    background: none;
    color: #5b6170;
}
.zoom {
    position: absolute;
    right: 12px;
    top: 261px;
    border-radius: 4px;
    background-color: #fff;
    box-shadow: 0 0 4px rgba(0, 0, 0, 0.2);
}
.zoom button + button {
    border-top: 1px solid #bbb;
}

/* online notifications */
.online {
    position: absolute;
    right: 3px;
    bottom: 1px;
    width: 440px;
    border-radius: 8px;
    overflow: hidden;
    background-color: #fff;
    box-shadow: 0 0 6px rgba(0, 0, 0, 0.4);
    z-index: 2;
}
.online-head {
    display: flex;
    align-items: center;
    gap: 21px;
    height: 38px;
    padding: 0 16px 0 12px;
    background-color: #5b6170;
    color: #fff;
}
.online-head h2 {
    flex: 1;
    margin: 0;
    font-size: 16px;
    font-weight: 500;
}
.filter {
    display: flex;
    align-items: center;
    gap: 8px;
    height: 48px;
    padding: 4px 36px 0 12px;
    color: #474e60;
}
.select {
    display: flex;
    flex: 1;
    align-items: center;
    height: 28px;
    padding: 0 8px;
    border: 1px solid #ddd;
    border-radius: 4px;
}
.select select {
    flex: 1;
    padding: 0;
    border: none;
    outline: none;
    appearance: none;
    background: none;
}
.list {
    display: flex;
    height: 127px;
    border-top: 1px solid #ddd;
    overflow: hidden;
}
.list ul {
    flex: 1;
    margin: 0;
    padding: 0;
    list-style: none;
}
.list li {
    display: flex;
    align-items: center;
    height: 37px;
    padding-right: 13px;
    border-bottom: 1px solid #ddd;
    background-color: #edf1fe;
}
.list li b {
    margin: 0 16px 0 4px;
    font-weight: 500;
}
.list li a {
    margin-right: auto;
    color: #5b86fb;
    text-decoration: none;
}
.list li .plain + .plain {
    margin-left: 10px;
}
.mark {
    width: 6px;
    height: 20px;
    margin-right: 7px;
    border: 1px solid #bcdcfb;
    border-left: none;
    border-radius: 0 4px 4px 0;
    background-color: #fff;
}
.mark.orange {
    border-color: #fd9f28;
    background-color: #fd9f28;
}
.bar {
    display: flex;
    flex-direction: column;
    align-items: center;
    width: 17px;
    padding: 7px 0;
    background-color: #f1f1f1;
}
.thumb {
    width: 13px;
    height: 35px;
    margin: 5px 0 auto;
    background-color: #c1c1c1;
}
.online-foot {
    display: flex;
    justify-content: space-between;
    height: 44px;
    padding: 0 12px;
    color: #474e60;
}

/* bottom bar */
footer {
    display: flex;
    flex: none;
    align-items: center;
    justify-content: space-between;
    height: 37px;
    padding: 0 17px 0 21px;
    border-top: 1px solid #ddd;
    background-color: #fff;
    color: #474e60;
}
.left {
    display: flex;
    gap: 19px;
}
.right {
    display: flex;
    align-items: center;
    gap: 16px;
}
.alerts {
    gap: 5px;
}
.badge {
    width: 29px;
    border-radius: 8px;
    background-color: #f4503c;
    color: #fff;
    font-size: 12px;
    font-weight: 500;
    line-height: 16px;
}
```
